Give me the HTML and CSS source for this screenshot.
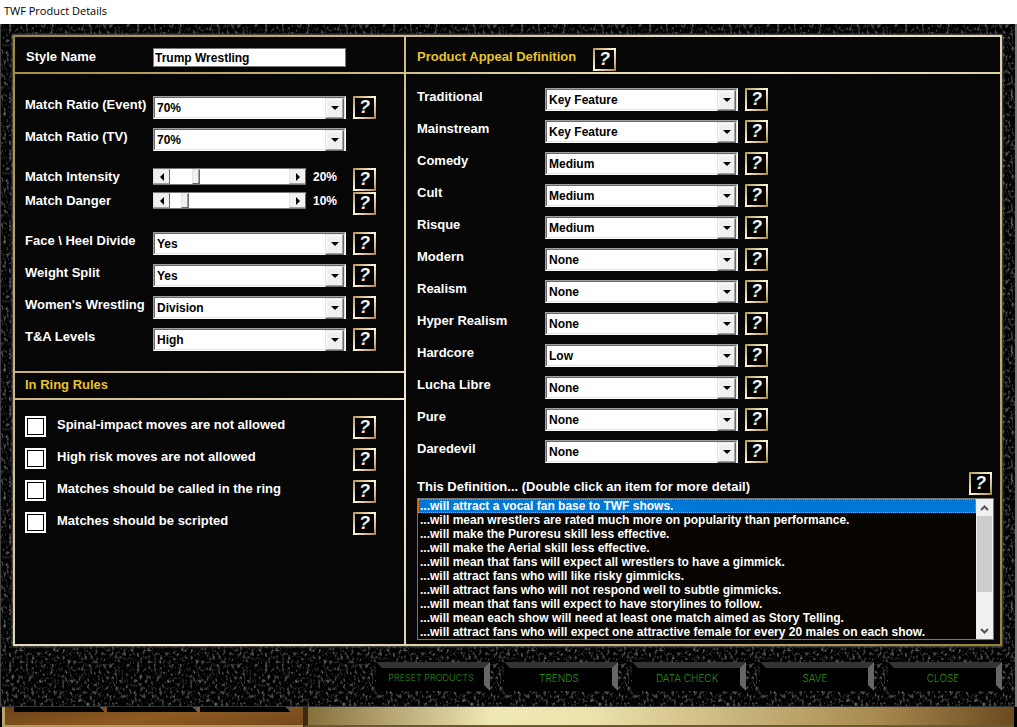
FILE: index.html
```html
<!DOCTYPE html>
<html lang="en">
  <head>
    <meta charset="utf-8" />
    <meta name="viewport" content="width=device-width, initial-scale=1" />
    <title>TWF Product Details</title>
    <link rel="stylesheet" href="styles.css">
  </head>
  <body>
    <div class="titlebar">TWF Product Details</div>

    <form class="window">
      <div class="panel">
        <div class="left">
          <div class="cell header">
            <label class="label" for="style-name">Style Name</label>
            <input type="text" class="textbox" id="style-name" value="Trump Wrestling" />
          </div>

          <div class="cell settings">
            <div class="group">
              <div class="row">
                <label for="ratio-event">Match Ratio (Event)</label>
                <div class="combo"><select id="ratio-event"><option>70%</option></select></div>
                <button type="button" class="help">?</button>
              </div>
              <div class="row">
                <label for="ratio-tv">Match Ratio (TV)</label>
                <div class="combo"><select id="ratio-tv"><option>70%</option></select></div>
              </div>
            </div>

            <div class="group sliders">
              <div class="row">
                <label for="intensity">Match Intensity</label>
                <div class="slider">
                  <div class="bar">
                    <button type="button" class="arrow prev" aria-label="Less"></button>
                    <input type="range" id="intensity" min="0" max="100" value="20" />
                    <button type="button" class="arrow next" aria-label="More"></button>
                  </div>
                  <output for="intensity">20%</output>
                </div>
                <button type="button" class="help">?</button>
              </div>
              <div class="row">
                <label for="danger">Match Danger</label>
                <div class="slider">
                  <div class="bar">
                    <button type="button" class="arrow prev" aria-label="Less"></button>
                    <input type="range" id="danger" min="0" max="100" value="10" />
                    <button type="button" class="arrow next" aria-label="More"></button>
                  </div>
                  <output for="danger">10%</output>
                </div>
                <button type="button" class="help">?</button>
              </div>
            </div>

            <div class="group">
              <div class="row">
                <label for="divide">Face \ Heel Divide</label>
                <div class="combo"><select id="divide"><option>Yes</option></select></div>
                <button type="button" class="help">?</button>
              </div>
              <div class="row">
                <label for="weight">Weight Split</label>
                <div class="combo"><select id="weight"><option>Yes</option></select></div>
                <button type="button" class="help">?</button>
              </div>
              <div class="row">
                <label for="women">Women's Wrestling</label>
                <div class="combo"><select id="women"><option>Division</option></select></div>
                <button type="button" class="help">?</button>
              </div>
              <div class="row">
                <label for="levels">T&amp;A Levels</label>
                <div class="combo"><select id="levels"><option>High</option></select></div>
                <button type="button" class="help">?</button>
              </div>
            </div>
          </div>

          <div class="cell subheader">
            <h2>In Ring Rules</h2>
          </div>

          <div class="cell rules">
            <div class="rule">
              <input type="checkbox" id="spinal" />
              <label for="spinal">Spinal-impact moves are not allowed</label>
              <button type="button" class="help">?</button>
            </div>
            <div class="rule">
              <input type="checkbox" id="highrisk" />
              <label for="highrisk">High risk moves are not allowed</label>
              <button type="button" class="help">?</button>
            </div>
            <div class="rule">
              <input type="checkbox" id="called" />
              <label for="called">Matches should be called in the ring</label>
              <button type="button" class="help">?</button>
            </div>
            <div class="rule">
              <input type="checkbox" id="scripted" />
              <label for="scripted">Matches should be scripted</label>
              <button type="button" class="help">?</button>
            </div>
          </div>
        </div>

        <div class="right">
          <div class="cell header">
            <h2>Product Appeal Definition</h2>
            <button type="button" class="help">?</button>
          </div>

          <div class="cell appeal">
            <div class="row">
              <label for="traditional">Traditional</label>
              <div class="combo"><select id="traditional"><option>Key Feature</option></select></div>
              <button type="button" class="help">?</button>
            </div>
            <div class="row">
              <label for="mainstream">Mainstream</label>
              <div class="combo"><select id="mainstream"><option>Key Feature</option></select></div>
              <button type="button" class="help">?</button>
            </div>
            <div class="row">
              <label for="comedy">Comedy</label>
              <div class="combo"><select id="comedy"><option>Medium</option></select></div>
              <button type="button" class="help">?</button>
            </div>
            <div class="row">
              <label for="cult">Cult</label>
              <div class="combo"><select id="cult"><option>Medium</option></select></div>
              <button type="button" class="help">?</button>
            </div>
            <div class="row">
              <label for="risque">Risque</label>
              <div class="combo"><select id="risque"><option>Medium</option></select></div>
              <button type="button" class="help">?</button>
            </div>
            <div class="row">
              <label for="modern">Modern</label>
              <div class="combo"><select id="modern"><option>None</option></select></div>
              <button type="button" class="help">?</button>
            </div>
            <div class="row">
              <label for="realism">Realism</label>
              <div class="combo"><select id="realism"><option>None</option></select></div>
              <button type="button" class="help">?</button>
            </div>
            <div class="row">
              <label for="hyper">Hyper Realism</label>
              <div class="combo"><select id="hyper"><option>None</option></select></div>
              <button type="button" class="help">?</button>
            </div>
            <div class="row">
              <label for="hardcore">Hardcore</label>
              <div class="combo"><select id="hardcore"><option>Low</option></select></div>
              <button type="button" class="help">?</button>
            </div>
            <div class="row">
              <label for="lucha">Lucha Libre</label>
              <div class="combo"><select id="lucha"><option>None</option></select></div>
              <button type="button" class="help">?</button>
            </div>
            <div class="row">
              <label for="pure">Pure</label>
              <div class="combo"><select id="pure"><option>None</option></select></div>
              <button type="button" class="help">?</button>
            </div>
            <div class="row">
              <label for="daredevil">Daredevil</label>
              <div class="combo"><select id="daredevil"><option>None</option></select></div>
              <button type="button" class="help">?</button>
            </div>

            <div class="list-head">
              <label for="definition">This Definition... (Double click an item for more detail)</label>
              <button type="button" class="help">?</button>
            </div>
            <div class="listbox">
              <select id="definition" size="10">
                <option selected>...will attract a vocal fan base to TWF shows.</option>
                <option>...will mean wrestlers are rated much more on popularity than performance.</option>
                <option>...will make the Puroresu skill less effective.</option>
                <option>...will make the Aerial skill less effective.</option>
                <option>...will mean that fans will expect all wrestlers to have a gimmick.</option>
                <option>...will attract fans who will like risky gimmicks.</option>
                <option>...will attract fans who will not respond well to subtle gimmicks.</option>
                <option>...will mean that fans will expect to have storylines to follow.</option>
                <option>...will mean each show will need at least one match aimed as Story Telling.</option>
                <option>...will attract fans who will expect one attractive female for every 20 males on each show.</option>
              </select>
              <div class="scrollbar">
                <button type="button" aria-label="Scroll up">
                  <svg width="9" height="6" viewBox="0 0 9 6"><path d="M1 5 4.500 1.500 8 5" /></svg>
                </button>
                <div class="thumb"></div>
                <button type="button" aria-label="Scroll down">
                  <svg width="9" height="6" viewBox="0 0 9 6"><path d="M1 1 4.500 4.500 8 1" /></svg>
                </button>
              </div>
            </div>
          </div>
        </div>
      </div>

      <div class="actions">
        <button type="button" class="small">PRESET PRODUCTS</button>
        <button type="button">TRENDS</button>
        <button type="button">DATA CHECK</button>
        <button type="button">SAVE</button>
        <button type="button">CLOSE</button>
      </div>
    </form>

    <div class="backdrop">
      <div class="wood">
        <span class="tab"></span>
        <span class="tab"></span>
        <span class="tab"></span>
      </div>
      <div class="brass"></div>
    </div>
  </body>
</html>
```
FILE: styles.css
```css
* {
  box-sizing: border-box;
}

body {
  margin: 0;
  background-color: black;
  color: white;
  font-family: "Liberation Sans", Arial, sans-serif;
  font-size: 13px;
  font-weight: bold;
  line-height: 18px;
}

button,
input,
select {
  font: inherit;
  margin: 0;
  padding: 0;
  border-radius: 0;
}

h2 {
  margin: 0;
  font-size: 13px;
  line-height: 18px;
  color: #e6c32c;
}

.titlebar {
  height: 24px;
  padding: 0 4px;
  background-color: white;
  color: black;
  font-family: "Open Sans", "Noto Sans", sans-serif;
  font-size: 11px;
  font-weight: normal;
  line-height: 22px;
}

/* Rough leather frame round the panel */
.window {
  padding: 11px 13px 15px 12px;
  border-left: 1px solid #444;
  border-right: 2px solid #777;
  border-bottom: 1px solid #333;
  background-color: black;
  background-image: url("data:image/svg+xml,%3Csvg xmlns='http://www.w3.org/2000/svg' width='128' height='128'%3E%3Cfilter id='n' x='0' y='0' width='100%25' height='100%25' color-interpolation-filters='sRGB'%3E%3CfeTurbulence type='fractalNoise' baseFrequency='.36 .26' numOctaves='3' seed='4' stitchTiles='stitch'/%3E%3CfeColorMatrix values='1.200 0 0 0 -.6 1.200 0 0 0 -.6 1.200 0 0 0 -.6 0 0 0 0 1'/%3E%3C/filter%3E%3Crect width='128' height='128' filter='url(%23n)'/%3E%3C/svg%3E");
}

/* The gaps between the cells show the gold as lines */
.panel {
  display: grid;
  grid-template-columns: 389px minmax(0, 1fr);
  gap: 2px;
  padding: 2px;
  background: linear-gradient(135deg, #a58634, #f7efd4 50%, #9c7d2e);
  box-shadow: 0 0 2px 1px #555;
}

.left {
  display: grid;
  grid-template-rows: auto auto auto 1fr;
  gap: 2px;
}

.right {
  display: grid;
  grid-template-rows: auto 1fr;
  gap: 2px;
}

.cell {
  background-color: #060606;
}

.header {
  display: flex;
  height: 35px;
  padding: 11px;
}

.header h2 {
  width: 176px;
}

.header .label {
  width: 127px;
}

.textbox {
  width: 193px;
  height: 19px;
  padding: 0 1px;
  border: 1px solid #777;
  background-color: white;
  color: black;
  font-size: 12px;
}

.settings {
  padding: 22px 10px 11px;
}

.group + .group {
  margin-top: 16px;
}

.group + .sliders {
  margin-top: 8px;
}

.row {
  display: grid;
  grid-template-columns: 121px 193px 23px;
  column-gap: 7px;
  height: 32px;
  align-items: start;
  white-space: nowrap;
}

.sliders .row {
  height: 24px;
}

.combo {
  position: relative;
  height: 23px;
  border: 1px solid;
  border-color: #a0a0a0 white white #a0a0a0;
}

.combo select {
  display: block;
  width: 100%;
  height: 21px;
  padding: 0 18px 0 2px;
  appearance: none;
  border: 1px solid;
  border-color: #696969 #e3e3e3 #e3e3e3 #696969;
  background-color: white;
  color: black;
  font-size: 12px;
}

/* Raised drop-down button with its triangle */
.combo::before {
  content: "";
  position: absolute;
  top: 1px;
  right: 1px;
  width: 17px;
  height: 19px;
  border: 1px solid;
  border-color: #e3e3e3 #696969 #696969 #e3e3e3;
  background-color: #f0f0f0;
  box-shadow: inset -1px -1px #a0a0a0, inset 1px 1px white;
  pointer-events: none;
}

.combo::after {
  content: "";
  position: absolute;
  top: 9px;
  right: 6px;
  border: 4px solid transparent;
  border-top-color: black;
  border-bottom: 0;
  pointer-events: none;
}

.help {
  width: 23px;
  height: 23px;
  border: 2px solid;
  border-image: linear-gradient(135deg, #b3934a, #fff8e0 50%, #a88434) 2;
  background-color: black;
  color: #f4f0e2;
  font-size: 18px;
  font-style: italic;
  line-height: 19px;
}

.slider {
  display: flex;
  gap: 7px;
}

.bar {
  display: flex;
  width: 153px;
  height: 17px;
  border-top: 1px solid #777;
  border-bottom: 1px solid #777;
  background-color: white;
}

.bar input {
  flex: 1;
  min-width: 0;
  height: 15px;
  appearance: none;
  background-color: white;
}

.bar input::-webkit-slider-thumb {
  appearance: none;
  width: 8px;
  height: 15px;
  border: 1px solid;
  border-color: #e3e3e3 #696969 #696969 #e3e3e3;
  background-color: #f0f0f0;
  box-shadow: inset -1px 0 #a0a0a0;
}

.arrow {
  display: flex;
  align-items: center;
  justify-content: center;
  width: 17px;
  height: 15px;
  border: 1px solid;
  border-color: #e3e3e3 #696969 #a0a0a0 #e3e3e3;
  background-color: #f0f0f0;
}

.arrow::before {
  content: "";
  border: 4px solid transparent;
}

.prev::before {
  border-left: 0;
  border-right-color: black;
}

.next::before {
  border-right: 0;
  border-left-color: black;
}

output {
  font-size: 12px;
}

.subheader {
  height: 25px;
  padding: 3px 10px;
}

.rules {
  padding: 16px 10px;
}

.rule {
  display: grid;
  grid-template-columns: 21px 1fr 23px;
  column-gap: 11px;
  height: 32px;
  padding-right: 18px;
  align-items: start;
}

.rule input {
  width: 21px;
  height: 21px;
  appearance: none;
  border: 2px solid white;
  background-color: white;
  box-shadow: inset 0 0 0 1px black;
}

.appeal {
  padding: 14px 6px 4px 11px;
}

.list-head {
  display: flex;
  justify-content: space-between;
  height: 26px;
  padding-right: 2px;
}

.list-head label {
  padding-top: 6px;
}

.listbox {
  display: flex;
  height: 142px;
  border: 1px solid #777;
  background-color: #080500;
}

.listbox select {
  flex: 1;
  min-width: 0;
  height: 140px;
  border: 0;
  outline: 0;
  overflow: hidden;
  background-color: #080500;
  color: white;
  font-size: 12px;
}

.listbox option {
  height: 14px;
  min-height: 14px;
  padding: 0 2px;
  font-weight: bold;
  line-height: 14px;
}

.listbox option:checked {
  background: #0078d7 linear-gradient(#0078d7, #0078d7);
  color: white;
  outline: 1px dotted #ff8728;
  outline-offset: -1px;
}

.scrollbar {
  display: flex;
  flex-direction: column;
  width: 17px;
  background-color: #f0f0f0;
}

.scrollbar button {
  display: flex;
  align-items: center;
  justify-content: center;
  height: 17px;
  border: 0;
  background-color: #f0f0f0;
}

.scrollbar button:last-child {
  margin-top: auto;
}

.scrollbar path {
  fill: none;
  stroke: #555;
  stroke-width: 2;
}

.thumb {
  height: 76px;
  margin: 0 1px;
  background-color: #cdcdcd;
}

.actions {
  display: flex;
  justify-content: flex-end;
  gap: 14px;
  padding-top: 16px;
}

.actions button {
  width: 114px;
  height: 29px;
  padding-right: 4px;
  border: 6px solid;
  border-color: #333 #666 black black;
  background-color: black;
  color: #2f9420;
  font-family: Inter, "Liberation Sans", sans-serif;
  font-size: 10px;
  font-weight: 300;
  line-height: 20px;
  white-space: nowrap;
}

.actions .small {
  font-size: 9px;
}

/* Slice of the main screen below the window */
.backdrop {
  display: flex;
  height: 20px;
  padding: 0 3px 0 2px;
}

.wood {
  display: flex;
  gap: 3px;
  width: 301px;
  padding-left: 9px;
  border-left: 3px solid #b9a36a;
  border-bottom: 2px solid #b09a5c;
  background: linear-gradient(170deg, #6b4218, #8f5a22 50%, #75491c);
}

.tab {
  width: 90px;
  height: 5px;
  background: linear-gradient(45deg, black 95%, #555 95%);
}

.brass {
  flex: 1;
  border-left: 5px solid #3a2a12;
  border-bottom: 2px solid #6b5a30;
  background: linear-gradient(90deg, #86703c, #f0e8b4 26%, #ece2ac 40%, #a88c50 80%, #6b4a1e);
}
```
